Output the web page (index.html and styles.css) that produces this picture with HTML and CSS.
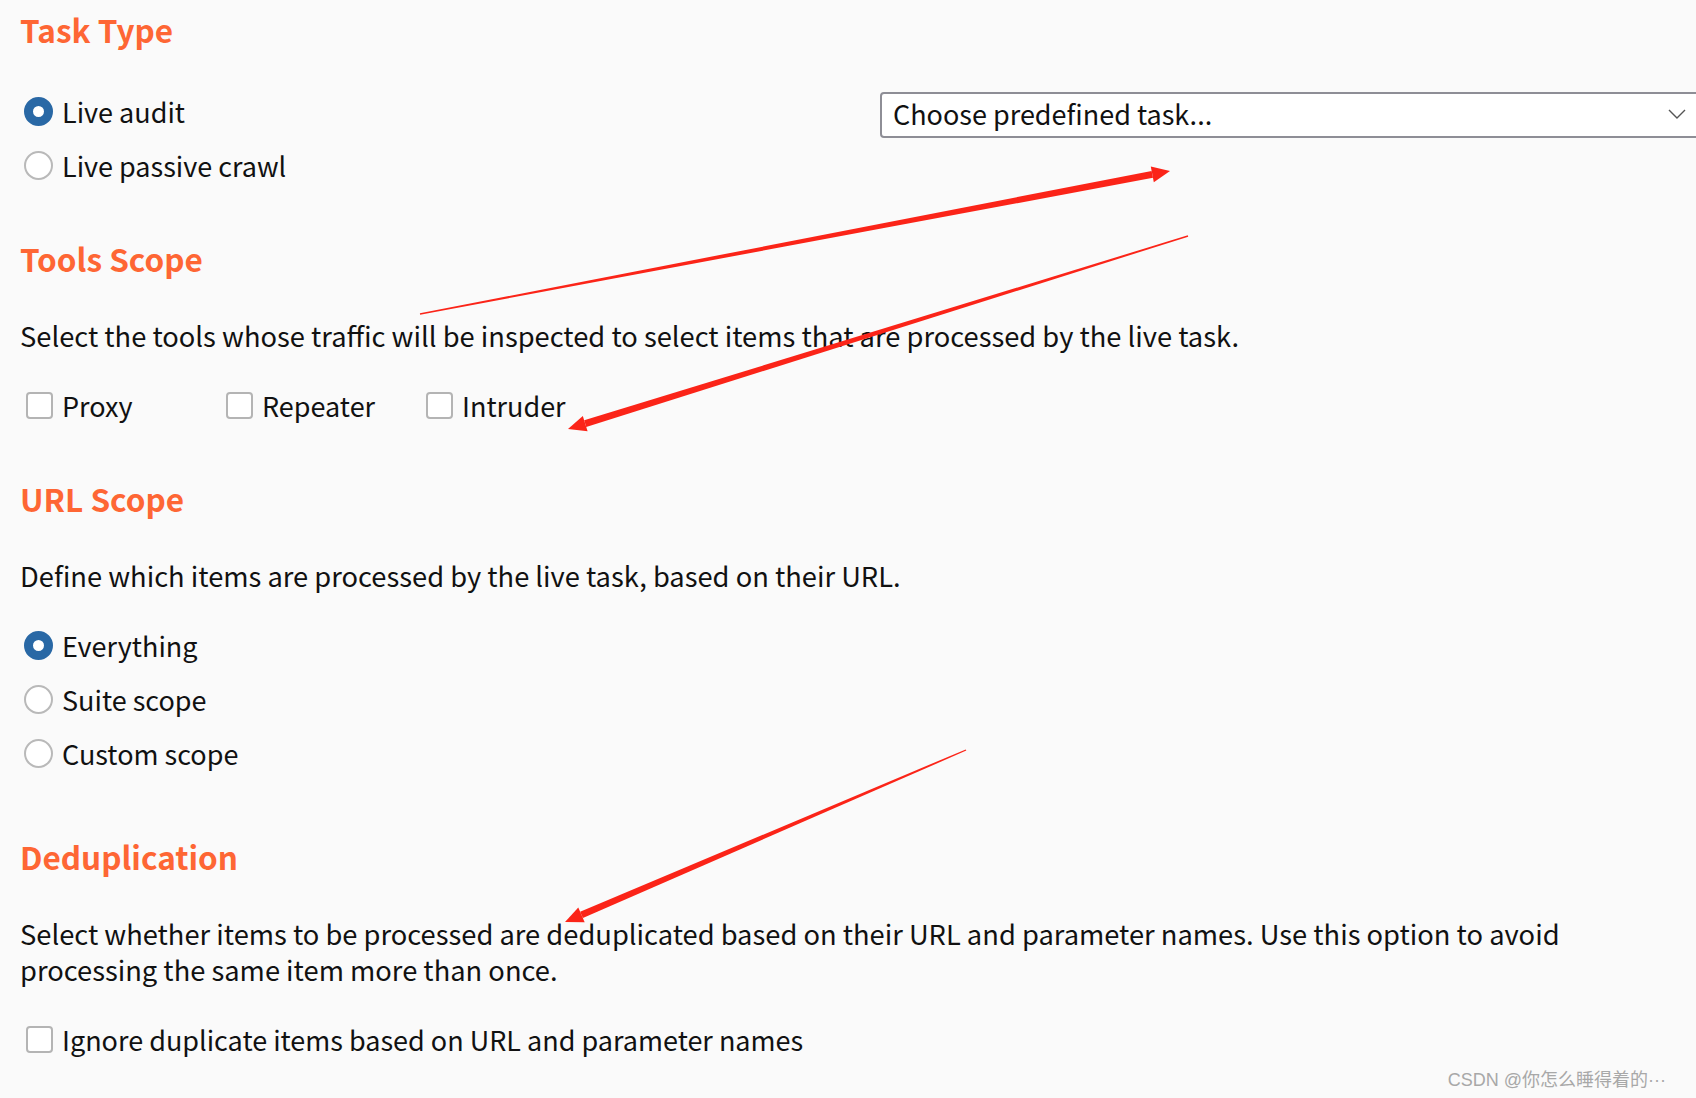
FILE: index.html
```html
<!DOCTYPE html>
<html lang="en">
<head>
  <meta charset="UTF-8" />
  <title>Live task settings</title>
  <link rel="stylesheet" href="styles.css">
</head>
<body>

<div class="page">

  <section class="block block-task">
    <h2 class="heading">Task Type</h2>
    <div class="task-row">
      <div class="options">
        <div class="option"><span class="radio checked"></span>Live audit</div>
        <div class="option"><span class="radio"></span>Live passive crawl</div>
      </div>
      <div class="select">
        <span>Choose predefined task...</span>
        <svg class="chevron" width="18" height="10" viewBox="0 0 18 10">
          <path d="M1 1 L9 9 L17 1" fill="none" stroke="#555" stroke-width="1.4"/>
        </svg>
      </div>
    </div>
  </section>

  <section class="block">
    <h2 class="heading">Tools Scope</h2>
    <p class="desc">Select the tools whose traffic will be inspected to select items that are processed by the live task.</p>
    <div class="checks">
      <div class="option"><span class="box"></span>Proxy</div>
      <div class="option"><span class="box"></span>Repeater</div>
      <div class="option"><span class="box"></span>Intruder</div>
    </div>
  </section>

  <section class="block">
    <h2 class="heading">URL Scope</h2>
    <p class="desc">Define which items are processed by the live task, based on their URL.</p>
    <div class="options">
      <div class="option"><span class="radio checked"></span>Everything</div>
      <div class="option"><span class="radio"></span>Suite scope</div>
      <div class="option"><span class="radio"></span>Custom scope</div>
    </div>
  </section>

  <section class="block block-dedup">
    <h2 class="heading">Deduplication</h2>
    <p class="desc">Select whether items to be processed are deduplicated based on their URL and parameter names. Use this option to avoid processing the same item more than once.</p>
    <div class="option"><span class="box"></span>Ignore duplicate items based on URL and parameter names</div>
  </section>

</div>

<!-- red annotation arrows drawn over the screenshot -->
<svg class="marks" width="1696" height="1098" viewBox="0 0 1696 1098">
  <g fill="#fb2418">
    <polygon points="420.1,314.7 419.9,313.3 1151.6,171.0 1153.0,177.8"/>
    <polygon points="1170,171 1150.8,166.5 1153.8,182.3"/>
    <polygon points="1188.2,236.7 1187.8,235.3 584.2,420.3 586.2,427.0"/>
    <polygon points="568,429 582.8,416.0 587.6,431.3"/>
    <polygon points="966.3,750.6 965.7,749.4 580.1,911.7 582.9,918.1"/>
    <polygon points="565,922 578.3,907.5 584.7,922.3"/>
  </g>
</svg>

<div class="watermark">CSDN @你怎么睡得着的···</div>

</body>
</html>
```

FILE: styles.css
```css
* {
  margin: 0;
  padding: 0;
  box-sizing: border-box;
}

body {
  background: #fafafa;
  font-family: "Noto Sans CJK SC", "Noto Sans", sans-serif;
  color: #111;
  width: 1696px;
  height: 1098px;
  overflow: hidden;
  position: relative;
}

.page {
  padding: 9px 0 0 20px;
}

.heading {
  font-size: 31.5px;
  font-weight: 700;
  line-height: 40px;
  color: #fe6634;
}

.desc {
  font-size: 27.3px;
  line-height: 36px;
  margin-top: 39px;
  max-width: 1580px;
}

.block {
  margin-top: 46px;
}

.block-task {
  margin-top: 0;
}

.block-dedup {
  margin-top: 56px;
}

.task-row {
  display: flex;
  align-items: flex-start;
  margin-top: 35px;
}

.options {
  display: flex;
  flex-direction: column;
  width: 860px;
  flex-shrink: 0;
}

.block .desc + .options,
.block .desc + .checks,
.block .desc + .option {
  margin-top: 25px;
}

.option {
  display: flex;
  align-items: center;
  height: 54px;
  font-size: 27px;
}

.radio {
  width: 29px;
  height: 29px;
  border-radius: 50%;
  border: 2px solid #b9b9b9;
  background: #fff;
  margin: 0 9px 0 4px;
  flex-shrink: 0;
}

.radio.checked {
  border: 9px solid #2968a5;
  background: #fff;
}

.box {
  width: 27px;
  height: 27px;
  border: 2px solid #b4b4b4;
  border-radius: 4px;
  background: #fff;
  margin: 0 9px 0 6px;
  flex-shrink: 0;
}

.checks {
  display: grid;
  grid-template-columns: 200px 200px 200px;
}

.select {
  display: flex;
  align-items: center;
  justify-content: space-between;
  width: 830px;
  height: 46px;
  margin-top: 8px;
  border: 2px solid #8e8e96;
  border-radius: 4px;
  background: #fff;
  padding: 0 22px 3px 11px;
  font-size: 27px;
  flex-shrink: 0;
}

.marks {
  position: absolute;
  top: 0;
  left: 0;
  pointer-events: none;
}

.watermark {
  position: absolute;
  right: 30px;
  bottom: 7px;
  font-family: "Liberation Sans", "Noto Sans CJK SC", sans-serif;
  font-size: 18px;
  color: #a8a8a8;
}
```
